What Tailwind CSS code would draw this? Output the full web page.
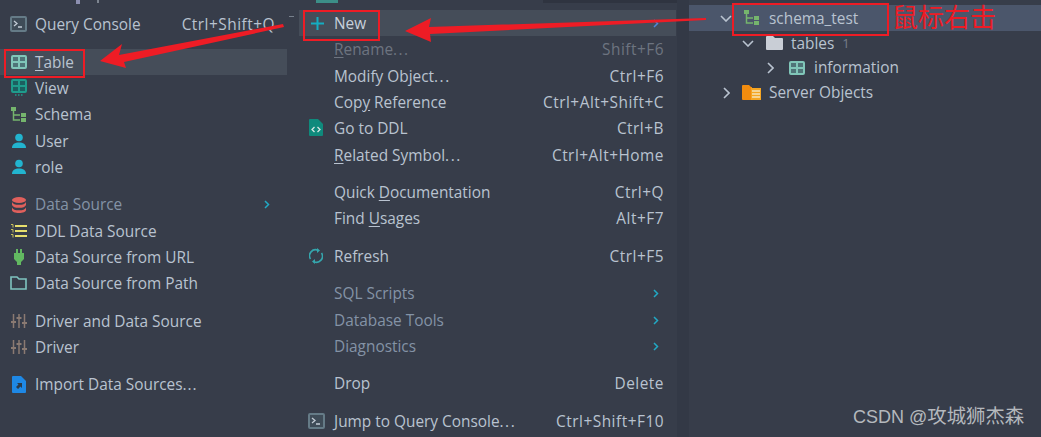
<!DOCTYPE html>
<html lang="en">
<head>
<meta charset="UTF-8">
<title>Database context menu</title>
<script src="https://cdn.jsdelivr.net/npm/@tailwindcss/browser@4"></script>
</head>
<body class="bg-[#373d4a]">
<div class="relative flex w-[1041px] h-[437px] overflow-hidden bg-[#373d4a] font-['Open_Sans','Noto_Sans_CJK_SC',sans-serif] text-[15.4px] leading-[27px] text-[#b9c3d0]">

  <!-- left submenu -->
  <div class="w-[299px] shrink-0 pt-[11px]">
    <div class="flex items-center h-[26px] pl-[10px] pr-[24px]">
      <svg class="w-[17px] h-[16px] mr-2" viewBox="0 0 17 16" fill="#3f4c58"><rect x="1" y="1" width="15" height="14" rx="1" stroke="#657b87" stroke-width="2"/><path d="M4 5l3 2.500-3 2.500M8 11h4" fill="none" stroke="#c3ccd6" stroke-width="1.300"/></svg>
      <span class="flex-1">Query Console</span><span class="tracking-[0.5px]">Ctrl+Shift+Q</span>
    </div>
    <div class="mt-[12px] flex items-center h-[26px] w-[287px] pl-[11px] bg-[#454d59]">
      <svg class="w-[16px] h-[14px] mr-2" viewBox="0 0 16 14" fill="#4f7478"><rect x="1" y="1" width="14" height="12" rx="1" stroke="#80c6b9" stroke-width="2"/><path d="M1 7h14M8 1v12" stroke="#80c6b9" stroke-width="2"/></svg>
      <span><span class="underline underline-offset-2">T</span>able</span>
    </div>
    <div class="flex items-center h-[26px] pl-[11px]">
      <svg class="w-[16px] h-[18px] mr-2" viewBox="0 0 16 18" fill="#1c5f60"><rect x="1" y="1" width="14" height="12" rx="1" stroke="#1f9c8c" stroke-width="2"/><path d="M1 7h14M8 1v12" stroke="#1f9c8c" stroke-width="2"/><path d="M4 16h1.500M7 16h1.500M10 16h1.500" stroke="#1f9c8c" stroke-width="1.500"/></svg>
      <span>View</span>
    </div>
    <div class="flex items-center h-[27px] pl-[11px]">
      <svg class="w-[16px] h-[16px] mr-2" viewBox="0 0 16 16" fill="none"><rect x="0" y="0" width="5" height="4" fill="#75b56d"/><path d="M2.500 4v9H9M2.500 8H9" stroke="#75b56d" stroke-width="1.500"/><rect x="10" y="6" width="5" height="4" fill="#75b56d"/><rect x="10" y="11" width="5" height="4" fill="#75b56d"/></svg>
      <span>Schema</span>
    </div>
    <div class="flex items-center h-[26px] pl-[11px]">
      <svg class="w-[16px] h-[16px] mr-2" viewBox="0 0 16 16" fill="#22b4cf"><circle cx="8" cy="4.500" r="3.800"/><path d="M1 15c0-4 3-5.500 7-5.500s7 1.500 7 5.500z"/></svg>
      <span>User</span>
    </div>
    <div class="flex items-center h-[26px] pl-[11px]">
      <svg class="w-[16px] h-[16px] mr-2" viewBox="0 0 16 16" fill="#22b4cf"><circle cx="8" cy="4.500" r="3.800"/><path d="M1 15c0-4 3-5.500 7-5.500s7 1.500 7 5.500z"/></svg>
      <span>role</span>
    </div>
    <div class="mt-[11px] flex items-center h-[27px] w-[272px] pl-[11px] pr-[2px]">
      <svg class="w-[16px] h-[16px] mr-2" viewBox="0 0 16 16" fill="#e0605c"><ellipse cx="8" cy="3" rx="7" ry="3"/><path d="M1 5c1 2 3 2.800 7 2.800S14 7 15 5v3c-1 2-3 2.800-7 2.800S2 10 1 8z"/><path d="M1 10.500c1 2 3 2.800 7 2.800s6-.8 7-2.800V13c0 1.800-3 3-7 3s-7-1.200-7-3z"/></svg>
      <span class="flex-1 text-[#8493a6]">Data Source</span>
      <svg class="w-[6px] h-[9px]" viewBox="0 0 6 9" fill="none"><path d="M1 1l3.500 3.500L1 8" stroke="#22a9c4" stroke-width="1.500"/></svg>
    </div>
    <div class="flex items-center h-[26px] pl-[10px]">
      <svg class="w-[17px] h-[14px] mr-2" viewBox="0 0 17 14" fill="none"><path d="M5 2h12M5 7h12M5 12h12" stroke="#e6de6c" stroke-width="2"/><path d="M1 .5h2v3M1 5.500h2v3M1 10.500h2v3" stroke="#c9c25c" stroke-width="1"/></svg>
      <span>DDL Data Source</span>
    </div>
    <div class="flex items-center h-[26px] pl-[11px]">
      <svg class="w-[16px] h-[16px] mr-2" viewBox="0 0 16 16" fill="#62b861"><path d="M5 0h2v4h2V0h2v4h2v6l-3 3v3H6v-3l-3-3V4h2z"/></svg>
      <span>Data Source from URL</span>
    </div>
    <div class="flex items-center h-[26px] pl-[10px]">
      <svg class="w-[17px] h-[14px] mr-2" viewBox="0 0 17 14" fill="none"><path d="M1 13V1h6l2 2h7v10z" stroke="#7fc4c0" stroke-width="1.600"/></svg>
      <span>Data Source from Path</span>
    </div>
    <div class="mt-[12px] flex items-center h-[26px] pl-[11px]">
      <svg class="w-[16px] h-[16px] mr-2" viewBox="0 0 16 16" fill="none"><path d="M2.500 1v14M8 1v14M13.500 1v14" stroke="#8a7a72" stroke-width="1.500"/><path d="M0 9h5M5.500 5h5M11 10h5" stroke="#8a7a72" stroke-width="2"/></svg>
      <span>Driver and Data Source</span>
    </div>
    <div class="flex items-center h-[26px] pl-[11px]">
      <svg class="w-[16px] h-[16px] mr-2" viewBox="0 0 16 16" fill="none"><path d="M2.500 1v14M8 1v14M13.500 1v14" stroke="#8a7a72" stroke-width="1.500"/><path d="M0 9h5M5.500 5h5M11 10h5" stroke="#8a7a72" stroke-width="2"/></svg>
      <span>Driver</span>
    </div>
    <div class="mt-[11px] flex items-center h-[26px] pl-[12px]">
      <svg class="w-[14px] h-[17px] mr-[9px]" viewBox="0 0 14 17"><path d="M1 0h8l5 5v11a1 1 0 0 1-1 1H1a1 1 0 0 1-1-1V1a1 1 0 0 1 1-1z" fill="#1e88e5"/><path d="M5 7h5v5l-1.500-1.500L6 13l-2-2 2.500-2.500z" fill="#2b3a4a"/></svg>
      <span>Import Data Sources<span class="tracking-[1px]">...</span></span>
    </div>
  </div>

  <!-- context menu -->
  <div class="w-[378px] shrink-0 pt-[10px] pr-[1px]">
    <div class="flex items-center h-[26px] pl-[12px] pr-[17px] bg-[#454d59]">
      <svg class="w-[13px] h-[13px] mr-[10px]" viewBox="0 0 13 13" fill="none"><path d="M6.500 0v13M0 6.500h13" stroke="#14adc2" stroke-width="2"/></svg>
      <span class="flex-1 text-[#c7d0db]">New</span>
      <svg class="w-[6px] h-[9px]" viewBox="0 0 6 9" fill="none"><path d="M1 1l3.500 3.500L1 8" stroke="#4f86d8" stroke-width="1.500"/></svg>
    </div>
    <div class="flex items-center justify-between h-[27px] pl-[35px] pr-[12px] text-[#6d7480]"><span><span class="underline underline-offset-2">R</span>ename<span class="tracking-[1.5px]">...</span></span><span class="tracking-[0.5px]">Shift+F6</span></div>
    <div class="flex items-center justify-between h-[26px] pl-[35px] pr-[12px]"><span>Modify Object<span class="tracking-[1.5px]">...</span></span><span class="tracking-[0.5px]">Ctrl+F6</span></div>
    <div class="flex items-center justify-between h-[26px] pl-[35px] pr-[12px]"><span>Cop<span class="underline underline-offset-2">y</span> Reference</span><span class="tracking-[0.5px]">Ctrl+Alt+Shift+C</span></div>
    <div class="relative flex items-center justify-between h-[27px] pl-[35px] pr-[12px]">
      <svg class="absolute left-[10px] top-[4px] w-[14px] h-[17px]" viewBox="0 0 14 17"><path d="M1 0h8l5 5v11a1 1 0 0 1-1 1H1a1 1 0 0 1-1-1V1a1 1 0 0 1 1-1z" fill="#0f8a7c"/><path d="M5.500 8L3 10.500 5.500 13M8.500 8L11 10.500 8.500 13" fill="none" stroke="#d5e6e3" stroke-width="1.300"/></svg>
      <span>Go to DDL</span><span class="tracking-[0.5px]">Ctrl+B</span>
    </div>
    <div class="flex items-center justify-between h-[27px] pl-[35px] pr-[12px]"><span><span class="underline underline-offset-2">R</span>elated Symbol<span class="tracking-[1.5px]">...</span></span><span class="tracking-[0.5px]">Ctrl+Alt+Home</span></div>
    <div class="mt-[10px] flex items-center justify-between h-[26px] pl-[35px] pr-[12px]"><span>Quick <span class="underline underline-offset-2">D</span>ocumentation</span><span class="tracking-[0.5px]">Ctrl+Q</span></div>
    <div class="flex items-center justify-between h-[26px] pl-[35px] pr-[12px]"><span>Find <span class="underline underline-offset-2">U</span>sages</span><span class="tracking-[0.5px]">Alt+F7</span></div>
    <div class="relative mt-[12px] flex items-center justify-between h-[26px] pl-[35px] pr-[12px]">
      <svg class="absolute left-[10px] top-[5px] w-[14px] h-[16px]" viewBox="0 0 14 16" fill="none"><path d="M1.500 11A6 6 0 0 1 9 2.300M12.500 5A6 6 0 0 1 5 13.700" stroke="#35a6ad" stroke-width="1.600"/><path d="M8 0l3 2.500-3 2.500zM6 11l-3 2.500 3 2.500z" fill="#35a6ad"/></svg>
      <span>Refresh</span><span class="tracking-[0.5px]">Ctrl+F5</span>
    </div>
    <div class="mt-[11px] flex items-center justify-between h-[27px] pl-[35px] pr-[17px] text-[#8493a6]"><span>SQL Scripts</span><svg class="w-[6px] h-[9px]" viewBox="0 0 6 9" fill="none"><path d="M1 1l3.500 3.500L1 8" stroke="#22a9c4" stroke-width="1.500"/></svg></div>
    <div class="flex items-center justify-between h-[26px] pl-[35px] pr-[17px] text-[#8493a6]"><span>Database Tools</span><svg class="w-[6px] h-[9px]" viewBox="0 0 6 9" fill="none"><path d="M1 1l3.500 3.500L1 8" stroke="#22a9c4" stroke-width="1.500"/></svg></div>
    <div class="flex items-center justify-between h-[26px] pl-[35px] pr-[17px] text-[#8493a6]"><span>Diagnostics</span><svg class="w-[6px] h-[9px]" viewBox="0 0 6 9" fill="none"><path d="M1 1l3.500 3.500L1 8" stroke="#22a9c4" stroke-width="1.500"/></svg></div>
    <div class="mt-[11px] flex items-center justify-between h-[26px] pl-[35px] pr-[12px]"><span>Drop</span><span class="tracking-[0.5px]">Delete</span></div>
    <div class="relative mt-[12px] flex items-center justify-between h-[26px] pl-[35px] pr-[12px]">
      <svg class="absolute left-[9px] top-[5px] w-[17px] h-[16px]" viewBox="0 0 17 16" fill="#3f4c58"><rect x="1" y="1" width="15" height="14" rx="1" stroke="#657b87" stroke-width="2"/><path d="M4 5l3 2.500-3 2.500M8 11h4" fill="none" stroke="#c3ccd6" stroke-width="1.300"/></svg>
      <span>Jump to Query Console<span class="tracking-[1.5px]">...</span></span><span class="tracking-[0.5px]">Ctrl+Shift+F10</span>
    </div>
  </div>

  <!-- spacer strip between menu and tree -->
  <div class="w-[12px] shrink-0 bg-[#333946]"></div>

  <!-- schema tree -->
  <div class="flex-1 pt-[5px]">
    <div class="flex items-center h-[26px] pl-[31px] bg-[#4b566b]">
      <svg class="w-[12px] h-[7px] mr-[12px]" viewBox="0 0 12 7" fill="none"><path d="M1 1l5 5 5-5" stroke="#b9c3d0" stroke-width="1.600"/></svg>
      <svg class="w-[16px] h-[16px] mr-[9px]" viewBox="0 0 16 16" fill="none"><rect x="0" y="0" width="5" height="4" fill="#75b56d"/><path d="M2.500 4v9H9M2.500 8H9" stroke="#75b56d" stroke-width="1.500"/><rect x="10" y="6" width="5" height="4" fill="#75b56d"/><rect x="10" y="11" width="5" height="4" fill="#75b56d"/></svg>
      <span>schema_test</span>
    </div>
    <div class="flex items-center h-[24px] pl-[53px]">
      <svg class="w-[12px] h-[7px] mr-[12px]" viewBox="0 0 12 7" fill="none"><path d="M1 1l5 5 5-5" stroke="#b9c3d0" stroke-width="1.600"/></svg>
      <svg class="w-[17px] h-[14px] mr-[8px]" viewBox="0 0 17 14" fill="#c9ced6"><path d="M1 0h6l2 2h7a1 1 0 0 1 1 1v10a1 1 0 0 1-1 1H1a1 1 0 0 1-1-1V1a1 1 0 0 1 1-1z"/></svg>
      <span>tables</span><span class="ml-[8px] text-[13px] text-[#767e8a]">1</span>
    </div>
    <div class="flex items-center h-[25px] pl-[78px]">
      <svg class="w-[7px] h-[12px] mr-[15px]" viewBox="0 0 7 12" fill="none"><path d="M1 1l5 5-5 5" stroke="#b9c3d0" stroke-width="1.600"/></svg>
      <svg class="w-[16px] h-[14px] mr-[9px]" viewBox="0 0 16 14" fill="#4f7478"><rect x="1" y="1" width="14" height="12" rx="1" stroke="#80c6b9" stroke-width="2"/><path d="M1 7h14M8 1v12" stroke="#80c6b9" stroke-width="2"/></svg>
      <span>information</span>
    </div>
    <div class="flex items-center h-[25px] pl-[34px]">
      <svg class="w-[7px] h-[12px] mr-[12px]" viewBox="0 0 7 12" fill="none"><path d="M1 1l5 5-5 5" stroke="#b9c3d0" stroke-width="1.600"/></svg>
      <svg class="w-[19px] h-[15px] mr-[8px]" viewBox="0 0 19 15"><path d="M1 0h6l2 2h1v13H1a1 1 0 0 1-1-1V1a1 1 0 0 1 1-1z" fill="#f28c0f"/><rect x="9" y="3" width="10" height="12" fill="#f5a623"/><path d="M10 6h8M10 9h8M10 12h8" stroke="#f6e3b8" stroke-width="1.500"/></svg>
      <span>Server Objects</span>
    </div>
  </div>

  <!-- bits of the neighbouring windows cut off at the top edge -->
  <div class="absolute left-[76px] top-0 w-[4px] h-[4px] bg-[#8c8fb0]"></div>
  <div class="absolute left-[97px] top-0 w-[2px] h-[3px] bg-[#7d8590]"></div>
  <div class="absolute left-[316px] top-0 w-[22px] h-[3px] bg-[#3c8f88]"></div>
  <div class="absolute left-[543px] top-0 w-[134px] h-[3px] bg-[#2f3440]"></div>
  <div class="absolute left-[289px] top-[16px] w-[5px] h-[1px] bg-[#77808c]"></div>

  <!-- red annotations drawn on top of the screenshot -->
  <div class="absolute left-[4px] top-[49px] w-[81px] h-[29px] border-2 border-[#ee1c25]"></div>
  <div class="absolute left-[303px] top-[10px] w-[77px] h-[31px] border-2 border-[#ee1c25]"></div>
  <div class="absolute left-[732px] top-[3px] w-[157px] h-[33px] border-2 border-[#ee1c25]"></div>
  <svg class="absolute left-0 top-0 w-[1041px] h-[437px] pointer-events-none" viewBox="0 0 1041 437">
    <polygon points="100,61 122,44 119,55 283,24 284,27 124,62 126,68" fill="#ee1c25"/>
    <polygon points="405,31 431,18 429,27 706,18 706,20 430,34 431,42" fill="#ee1c25"/>
  </svg>
  <span class="absolute left-[892px] top-[2px] text-[26px] leading-[30px] text-[#ee1c25]">鼠标右击</span>
  <span class="absolute left-[853px] top-[404px] text-[18px] leading-[24px] text-[#b4b8bd] font-['Liberation_Sans','Noto_Sans_CJK_SC',sans-serif]">CSDN @<span class="text-[19.4px]">攻城狮杰森</span></span>
</div>
</body>
</html>
